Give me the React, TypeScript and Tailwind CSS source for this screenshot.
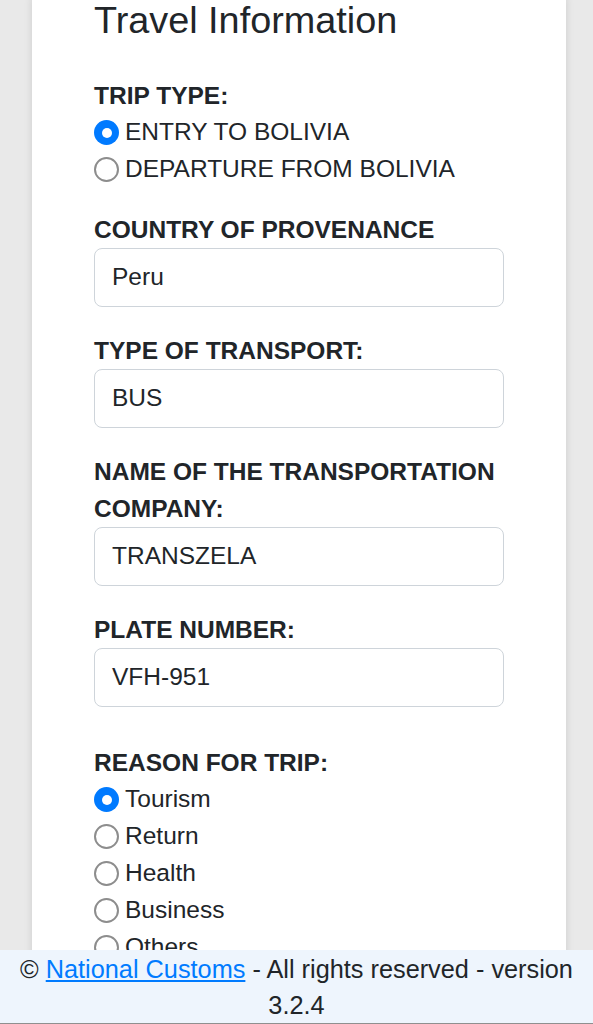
import React from 'react';

const font = { fontFamily: '"Liberation Sans", Arial, sans-serif' };

const Radio: React.FC<{ label: string; checked?: boolean }> = ({ label, checked }) => (
  <div className="flex items-center h-[37px]">
    {checked ? (
      <span className="w-[25px] h-[25px] rounded-full bg-[#007aff] flex items-center justify-center shrink-0">
        <span className="w-[10px] h-[10px] rounded-full bg-white" />
      </span>
    ) : (
      <span className="w-[25px] h-[25px] rounded-full border-2 border-[#8d8d8d] bg-white shrink-0" />
    )}
    <span className="ml-[6px] text-[24.5px] text-[#212529]">{label}</span>
  </div>
);

const Field: React.FC<{ label: string; value: string; className?: string }> = ({ label, value, className }) => (
  <div className={className}>
    <div className="text-[24.5px] leading-[37px] font-bold text-[#212529]">{label}</div>
    <div className="h-[59px] border border-[#ced4da] rounded-[8px] px-[17px] flex items-center text-[24.5px] text-[#212529] bg-white">
      {value}
    </div>
  </div>
);

export default function App() {
  return (
    <div className="h-screen bg-[#e9e9e9] overflow-hidden" style={font}>
      <div className="ml-[32px] mr-[27px] bg-white shadow-[0_0_8px_rgba(0,0,0,0.12)] px-[62px] pb-[120px]">
        <h3 className="mt-[-3px] text-[37.8px] leading-[46px] font-normal text-[#212529]">Travel Information</h3>

        <div className="mt-[34px]">
          <div className="text-[24.5px] leading-[37px] font-bold text-[#212529]">TRIP TYPE:</div>
          <Radio label="ENTRY TO BOLIVIA" checked />
          <Radio label="DEPARTURE FROM BOLIVIA" />
        </div>

        <Field className="mt-[23px]" label="COUNTRY OF PROVENANCE" value="Peru" />
        <Field className="mt-[25px]" label="TYPE OF TRANSPORT:" value="BUS" />
        <Field className="mt-[25px]" label="NAME OF THE TRANSPORTATION COMPANY:" value="TRANSZELA" />
        <Field className="mt-[25px]" label="PLATE NUMBER:" value="VFH-951" />

        <div className="mt-[37px]">
          <div className="text-[24.5px] leading-[37px] font-bold text-[#212529]">REASON FOR TRIP:</div>
          <Radio label="Tourism" checked />
          <Radio label="Return" />
          <Radio label="Health" />
          <Radio label="Business" />
          <Radio label="Others" />
        </div>
      </div>

      <footer className="fixed bottom-0 left-0 right-0 h-[74px] bg-[#eef5fd] border-b border-[#8f8f8f] px-[10px] pt-px text-center text-[25.3px] leading-[36px] text-[#212529]">
        © <a href="#" className="text-[#007bff] underline">National Customs</a> - All rights reserved - version 3.2.4
      </footer>
    </div>
  );
}
